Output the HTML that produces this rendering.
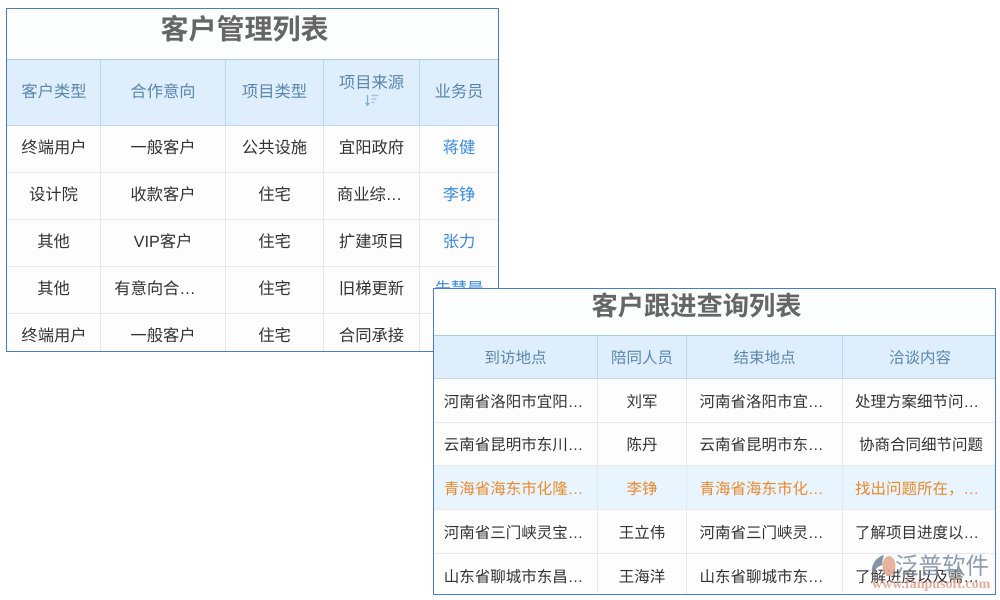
<!DOCTYPE html>
<html lang="zh">
<head>
<meta charset="utf-8">
<title>客户列表</title>
<style>
html,body{margin:0;padding:0;background:#fff;}
body{width:1000px;height:600px;position:relative;overflow:hidden;font-family:"Liberation Sans","Noto Sans CJK SC",sans-serif;text-rendering:geometricPrecision;}
.panel{position:absolute;box-sizing:border-box;border:1px solid #4a7bd2;background:#fdfefe;overflow:hidden;}
.title{position:absolute;right:0;text-align:center;font-weight:700;color:#666;white-space:nowrap;filter:blur(.3px);}
table{position:absolute;left:0;border-collapse:separate;border-spacing:0;table-layout:fixed;color:#333;}
.t1{font-size:16.3px;}
.t2{font-size:15.5px;}
th,td{padding:0;text-align:center;white-space:nowrap;overflow:hidden;box-sizing:border-box;font-weight:400;}
td{border-right:1px solid #e9e9e9;border-bottom:1px solid #e9e9e9;background:#fdfdfd;}
th{background:#deeefc;color:#5a87ad;border-right:1px solid #bcd6ec;border-bottom:1px solid #bcd9f0;border-top:1px solid #a9cbe8;}
tr>*:last-child{border-right:0;}
.t1 td{padding-bottom:6px;}
.t1 th{padding-bottom:5px;}
.t2 td{padding-bottom:0;}
.t2 th{padding-bottom:1px;}
td.lnk{color:#3a8ae4;}
.hl td{background:#e8f4fe;color:#ee8a2c;}
#wm{position:absolute;left:868px;top:550px;width:128px;height:46px;pointer-events:none;}
</style>
</head>
<body>

<div class="panel" style="left:6px;top:8px;width:493px;height:344px;">
  <div class="title" style="top:1px;left:-16px;font-size:28px;line-height:40px;">客户管理列表</div>
  <table class="t1" style="top:50px;width:491px;">
    <colgroup><col style="width:94px"><col style="width:125px"><col style="width:98px"><col style="width:96px"><col style="width:78px"></colgroup>
    <tr style="height:67px;"><th style="padding-left:1px;">客户类型</th><th>合作意向</th><th>项目类型</th><th style="line-height:21px;padding-bottom:6px;">项目来源<br><svg width="16" height="13" viewBox="0 0 16 13" style="display:block;margin:0 auto;"><path d="M3.5 1V11M1.5 8.8L3.5 11.3L5.5 8.8" fill="none" stroke="#86aed2" stroke-width="1.3"/><path d="M7.5 1.5H14.5M7.5 5H12.5M7.5 8.5H10.5" fill="none" stroke="#9dc0de" stroke-width="1.3"/></svg></th><th>业务员</th></tr>
    <tr style="height:47px;"><td style="padding-left:1px;">终端用户</td><td>一般客户</td><td>公共设施</td><td>宜阳政府</td><td class="lnk">蒋健</td></tr>
    <tr style="height:47px;"><td>设计院</td><td>收款客户</td><td>住宅</td><td style="padding-right:4px;">商业综…</td><td class="lnk">李铮</td></tr>
    <tr style="height:47px;"><td>其他</td><td>VIP客户</td><td>住宅</td><td>扩建项目</td><td class="lnk">张力</td></tr>
    <tr style="height:47px;"><td>其他</td><td style="padding-right:16px;">有意向合…</td><td>住宅</td><td>旧梯更新</td><td class="lnk">朱慧晨</td></tr>
    <tr style="height:47px;"><td style="padding-left:1px;">终端用户</td><td>一般客户</td><td>住宅</td><td>合同承接</td><td class="lnk"></td></tr>
  </table>
</div>

<div class="panel" style="left:433px;top:288px;width:563px;height:307px;">
  <div class="title" style="top:-2px;left:-36px;font-size:26.25px;line-height:38px;">客户跟进查询列表</div>
  <table class="t2" style="top:46px;width:561px;">
    <colgroup><col style="width:164px"><col style="width:89px"><col style="width:156px"><col style="width:152px"></colgroup>
    <tr style="height:44px;"><th>到访地点</th><th>陪同人员</th><th>结束地点</th><th style="padding-left:2px;">洽谈内容</th></tr>
    <tr style="height:44px;"><td style="padding-right:4px;">河南省洛阳市宜阳…</td><td>刘军</td><td style="padding-right:6px;">河南省洛阳市宜…</td><td style="padding-right:4px;">处理方案细节问…</td></tr>
    <tr style="height:43px;"><td style="padding-right:4px;">云南省昆明市东川…</td><td>陈丹</td><td style="padding-right:6px;">云南省昆明市东…</td><td style="padding-left:4px;">协商合同细节问题</td></tr>
    <tr class="hl" style="height:44px;"><td style="padding-right:4px;">青海省海东市化隆…</td><td>李铮</td><td style="padding-right:6px;">青海省海东市化…</td><td style="padding-right:4px;">找出问题所在，…</td></tr>
    <tr style="height:44px;"><td style="padding-right:4px;">河南省三门峡灵宝…</td><td>王立伟</td><td style="padding-right:6px;">河南省三门峡灵…</td><td style="padding-right:4px;">了解项目进度以…</td></tr>
    <tr style="height:44px;"><td style="padding-right:4px;">山东省聊城市东昌…</td><td>王海洋</td><td style="padding-right:6px;">山东省聊城市东…</td><td style="padding-right:4px;">了解进度以及需…</td></tr>
  </table>
</div>

<div id="wm">
  <svg width="28" height="26" viewBox="0 0 28 26" style="position:absolute;left:2px;top:4px;opacity:.85;">
    <path d="M14 1C7 3 2 9 2 16C2 18 3 19 4 20C5 15 8 12 12.500 11C12 7 13 4 14 1Z" fill="#6f8196"/>
    <ellipse cx="19" cy="12" rx="6.500" ry="10" fill="#e5a78e"/>
  </svg>
  <div style="position:absolute;left:27px;top:0;font-size:23.500px;line-height:32px;color:#7e90a8;opacity:.88;white-space:nowrap;">泛普软件</div>
  <div style="position:absolute;left:4px;top:27px;font-family:'Liberation Serif',serif;font-weight:700;font-size:14px;line-height:16px;color:#e3a08e;opacity:.85;white-space:nowrap;">www.fanpusoft.com</div>
</div>

</body>
</html>
